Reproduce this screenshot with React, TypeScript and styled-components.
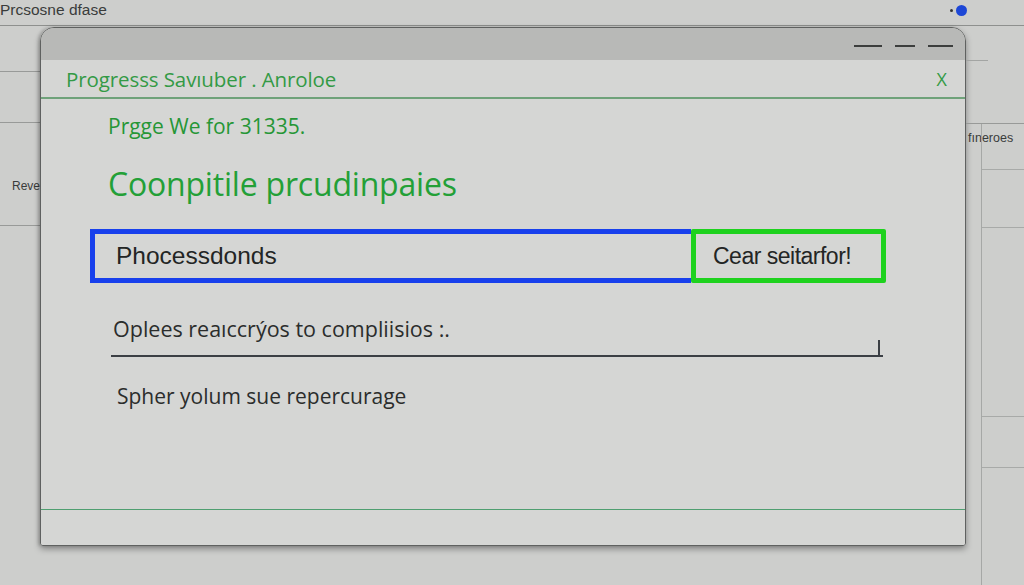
import React from 'react';
import styled, { createGlobalStyle } from 'styled-components';

const GlobalStyle = createGlobalStyle`
  html, body {
    margin: 0;
    padding: 0;
    background: #cdcecc;
  }
  body {
    font-family: 'Open Sans', 'Liberation Sans', sans-serif;
    overflow: hidden;
  }
`;

const App: React.FC = () => {
  return (
    <>
      <GlobalStyle />
      <StyledPage>
        <StyledTopBar>
          <span className="top-title">Prcsosne dfase</span>
          <StyledStatus>
            <span className="status-tick" />
            <span className="status-dot" />
          </StyledStatus>
        </StyledTopBar>
        <StyledBody>
          <StyledSideLeft>
            <StyledSideRow height={45} />
            <StyledSideRow height={50} />
            <StyledSideRow height={102}>
              <span className="side-label">Reve</span>
            </StyledSideRow>
          </StyledSideLeft>

          <StyledWindow>
            <StyledTitleBar>
              <StyledDash width={28} />
              <StyledDash width={20} />
              <StyledDash width={25} />
            </StyledTitleBar>
            <StyledPanel>
              <StyledHeader>
                <span className="header-title">Progresss Savıuber . Anroloe</span>
                <span className="header-close">X</span>
              </StyledHeader>
              <StyledContent>
                <StyledSubtitle>Prgge We for 31335.</StyledSubtitle>
                <StyledHeading>Coonpitile prcudinpaies</StyledHeading>
                <StyledSearchRow>
                  <StyledSearchInput>Phocessdonds</StyledSearchInput>
                  <StyledSearchButton>Cear seitarfor!</StyledSearchButton>
                </StyledSearchRow>
                <StyledUnderlined>
                  <span>Oplees reaıccrýos to compliisios :.</span>
                </StyledUnderlined>
                <StyledNote>Spher yolum sue repercurage</StyledNote>
              </StyledContent>
              <StyledFooter />
            </StyledPanel>
          </StyledWindow>

          <StyledSideRight>
            <StyledSideCap />
            <StyledSideRowRight height={62}>
              <span className="side-label">fıneroes</span>
            </StyledSideRowRight>
            <StyledSideList>
              <StyledSideListRow height={45} />
              <StyledSideListRow height={57} />
              <StyledSideListRow height={188} />
              <StyledSideListRow height={50} />
              <StyledSideListRow height={120} />
            </StyledSideList>
          </StyledSideRight>
        </StyledBody>
      </StyledPage>
    </>
  );
};

const StyledPage = styled.div`
  width: 1024px;
  height: 585px;
  overflow: hidden;
  background: #cdcecc;
  display: flex;
  flex-direction: column;
  color: #2b2d2c;
`;

const StyledTopBar = styled.div`
  height: 26px;
  flex-shrink: 0;
  border-bottom: 1px solid #8e908e;
  display: flex;
  align-items: center;
  justify-content: space-between;
  padding: 0 57px 5px 0;
  box-sizing: border-box;
  .top-title {
    font-family: 'Liberation Sans', Arial, sans-serif;
    font-size: 15.5px;
    color: #3a3c3b;
  }
`;

const StyledStatus = styled.div`
  display: flex;
  align-items: center;
  gap: 3px;
  .status-tick {
    width: 3px;
    height: 3px;
    border-radius: 50%;
    background: #333;
  }
  .status-dot {
    width: 11px;
    height: 11px;
    border-radius: 50%;
    background: #1d47d6;
  }
`;

const StyledBody = styled.div`
  flex: 1;
  min-height: 0;
  display: flex;
  align-items: flex-start;
`;

const StyledSideLeft = styled.div`
  width: 40px;
  flex-shrink: 0;
  display: flex;
  flex-direction: column;
`;

const StyledSideRow = styled.div<{ height: number }>`
  height: ${(p) => p.height}px;
  border-bottom: 1px solid #989a98;
  display: flex;
  align-items: center;
  overflow: hidden;
  .side-label {
    font-family: 'Liberation Sans', Arial, sans-serif;
    font-size: 12px;
    color: #3a3c3b;
    padding-left: 12px;
    margin-top: 24px;
    white-space: nowrap;
  }
`;

const StyledWindow = styled.div`
  width: 926px;
  height: 519px;
  flex-shrink: 0;
  margin-top: 1px;
  display: flex;
  flex-direction: column;
  border: 1.5px solid #5f6160;
  border-radius: 14px 14px 3px 3px;
  box-sizing: border-box;
  overflow: hidden;
  box-shadow: 0 3px 6px rgba(0, 0, 0, 0.35), -2px 0 3px rgba(0, 0, 0, 0.15);
`;

const StyledTitleBar = styled.div`
  height: 32px;
  background: #b8b9b7;
  display: flex;
  justify-content: flex-end;
  align-items: center;
  gap: 13px;
  padding: 4px 12px 0 0;
  box-sizing: border-box;
`;

const StyledDash = styled.span<{ width: number }>`
  width: ${(p) => p.width}px;
  height: 2px;
  background: #3c3e3d;
`;

const StyledPanel = styled.div`
  flex: 1;
  background: #d5d6d4;
  display: flex;
  flex-direction: column;
`;

const StyledHeader = styled.div`
  height: 37px;
  border-bottom: 2px solid #6fa27a;
  display: flex;
  align-items: center;
  justify-content: space-between;
  padding: 0 18px 0 25px;
  .header-title {
    font-size: 20.5px;
    color: #339a45;
    letter-spacing: -0.1px;
  }
  .header-close {
    font-size: 18px;
    color: #339a45;
  }
`;

const StyledContent = styled.div`
  flex: 1;
  display: flex;
  flex-direction: column;
  padding: 12px 0 0 67px;
`;

const StyledSubtitle = styled.div`
  font-size: 21px;
  color: #269636;
  line-height: 30px;
`;

const StyledHeading = styled.div`
  font-size: 32px;
  color: #23a037;
  line-height: 40px;
  margin-top: 23px;
  letter-spacing: -0.2px;
`;

const StyledSearchRow = styled.div`
  display: flex;
  margin: 25px 0 0 -18px;
  height: 54px;
`;

const StyledSearchInput = styled.div`
  width: 601px;
  box-sizing: border-box;
  border: 5px solid #1840ec;
  border-right: none;
  display: flex;
  align-items: center;
  padding-left: 21px;
  font-family: 'Liberation Sans', Arial, sans-serif;
  font-size: 24.5px;
  color: #232524;
`;

const StyledSearchButton = styled.div`
  width: 195px;
  box-sizing: border-box;
  border: 5px solid #1ed21e;
  border-radius: 2px;
  display: flex;
  align-items: center;
  padding-left: 17px;
  font-family: 'Liberation Sans', Arial, sans-serif;
  font-size: 23px;
  color: #232524;
  letter-spacing: -0.5px;
`;

const StyledUnderlined = styled.div`
  width: 770px;
  margin: 31px 0 0 3px;
  border-bottom: 2px solid #3b3f44;
  padding: 0 0 12px 2px;
  position: relative;
  font-size: 21.5px;
  color: #2b2d2c;
  &::after {
    content: '';
    position: absolute;
    right: 3px;
    bottom: 0;
    width: 2px;
    height: 15px;
    background: #3b3f44;
  }
`;

const StyledNote = styled.div`
  font-size: 21px;
  color: #2b2d2c;
  margin: 25px 0 0 9px;
`;

const StyledFooter = styled.div`
  height: 35px;
  border-top: 1px solid #4f9f70;
`;

const StyledSideRight = styled.div`
  flex: 1;
  display: flex;
  flex-direction: column;
`;

const StyledSideCap = styled.div`
  height: 34px;
  border-bottom: 1px solid #a3a5a3;
  width: 22px;
`;

const StyledSideRowRight = styled.div<{ height: number }>`
  height: ${(p) => p.height}px;
  border-bottom: 1px solid #989a98;
  display: flex;
  align-items: flex-end;
  .side-label {
    font-family: 'Liberation Sans', Arial, sans-serif;
    font-size: 12.5px;
    color: #3a3c3b;
    padding: 0 0 0 2px;
    margin-bottom: -22px;
  }
`;

const StyledSideList = styled.div`
  margin-left: 15px;
  border-left: 1.5px solid #a6a8a6;
  display: flex;
  flex-direction: column;
`;

const StyledSideListRow = styled.div<{ height: number }>`
  height: ${(p) => p.height}px;
  border-bottom: 1px solid #a8aaa8;
  &:last-child {
    border-bottom: none;
  }
`;

export default App;
